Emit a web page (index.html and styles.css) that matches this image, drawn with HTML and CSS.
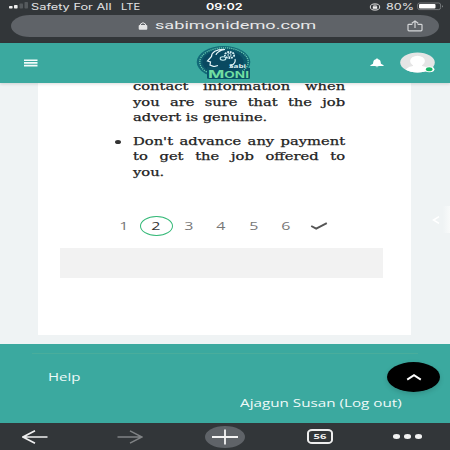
FILE: index.html
```
<!DOCTYPE html>
<html lang="en">
<head>
<meta charset="utf-8">
<title>Sabi Moni</title>
<link rel="stylesheet" href="styles.css">
</head>
<body>
<div class="phone">
  <div class="chrome">
    <div class="status">
      <svg class="signal" width="20" height="12" viewBox="0 0 20 12"><rect x="0" y="7" width="3.6" height="2.5" rx=".7" fill="#eee"/><rect x="5" y="6" width="3.6" height="3.5" rx=".7" fill="#eee"/><rect x="10.5" y="4.5" width="3.5" height="5" rx=".7" fill="#55595c"/><rect x="15.5" y="3" width="3.5" height="6.5" rx=".7" fill="#55595c"/></svg>
      <div class="carrier"><span>Safety For All</span></div>
      <div class="network"><span>LTE</span></div>
      <div class="clock"><span>09:02</span></div>
      <svg class="lock-rotation" width="12" height="10" viewBox="0 0 12 10"><ellipse cx="6" cy="5" rx="4.7" ry="3.1" fill="none" stroke="#ddd" stroke-width="1"/><rect x="3.8" y="4.3" width="4.4" height="2.5" fill="#eee"/><path d="M4.7 4.5V3.6Q6 2.5 7.3 3.6V4.5" fill="none" stroke="#eee" stroke-width=".7"/></svg>
      <div class="percent"><span>80%</span></div>
      <svg class="battery" width="28" height="10" viewBox="0 0 28 10"><rect x=".6" y="2" width="23" height="6.6" rx="2" fill="none" stroke="#85898b" stroke-width=".8"/><rect x="2" y="3.1" width="16.5" height="4.5" rx="1" fill="#fff"/><path d="M25 4.2Q27 5.3 25 6.4Z" fill="#85898b"/></svg>
    </div>
    <div class="address">
      <svg class="padlock" width="10" height="10" viewBox="0 0 10 10"><rect x=".7" y="4" width="8.6" height="4.8" rx="1" fill="#e4e5e6"/><path d="M2.5 4.5V3Q5 .4 7.5 3V4.5" fill="none" stroke="#e4e5e6" stroke-width="1"/></svg>
      <div class="url"><span>sabimonidemo.com</span></div>
      <svg class="share" width="16" height="12" viewBox="0 0 16 12"><path d="M5.4 4.3H2Q1 4.3 1 5V9.8Q1 10.8 2 10.8H14Q15 10.8 15 9.8V5Q15 4.3 14 4.3H10.6M8 8V1.2M4.8 3.2 8 1 11.2 3.2" fill="none" stroke="#d4d6d8" stroke-width="1.2"/></svg>
    </div>
  </div>

  <header class="header">
    <svg class="menu" width="14" height="8" viewBox="0 0 14 8"><path d="M0 1.2H13.5M0 3.9H13.5M0 6.6H13.5" stroke="#f2fbfa" stroke-width="1.6"/></svg>
    <svg class="logo" width="56" height="36" viewBox="0 0 56 36">
      <ellipse cx="27.5" cy="17" rx="26.8" ry="16" fill="#126a78"/>
      <path d="M11 23H54V32Q54 34 51 34H14Q11 34 11 31Z" fill="#0b5367"/>
      <ellipse cx="28" cy="17" rx="24.2" ry="14.2" fill="#0d596c" stroke="#67c9b0" stroke-width="1.3" stroke-dasharray="1.2 .9"/>
      <ellipse cx="27" cy="17" rx="20.5" ry="11.8" fill="#094961"/>
      <path d="M29 4.5C20 4 15.5 7.5 15.5 11.5L11.5 16 14.5 17 14 20 18 21.5 22 20.5M29 4.5C24 5 20 8 20 10M39 14C40 17 37 20 34 21.5" fill="none" stroke="#e4f5f8" stroke-width="1.2"/>
      <ellipse cx="33.5" cy="10" rx="4.7" ry="3" fill="none" stroke="#d7f1f4" stroke-width="1.8" stroke-dasharray="1.8 .8"/>
      <circle cx="33.5" cy="10" r="1.6" fill="none" stroke="#e8fafb" stroke-width=".8"/>
      <ellipse cx="27" cy="13.5" rx="2.8" ry="1.7" fill="none" stroke="#c8edf0" stroke-width="1.1"/>
      <path d="M11 22H24V26H54V33.5H11Z" fill="#0b5367"/>
      <text x="33" y="23.4" class="logo-sabi" textLength="17" lengthAdjust="spacingAndGlyphs">Sabi</text>
      <text x="12" y="32.5" class="logo-moni" textLength="41" lengthAdjust="spacingAndGlyphs"><tspan class="logo-initial">M</tspan>ONI</text>
    </svg>
    <svg class="bell" width="14" height="10" viewBox="0 0 14 10"><path d="M7 .4C7.8 .4 8 .8 8 1.2C11 1.8 10.7 4.5 11 5.7L13.6 7.3V8H.4V7.3L3 5.7C3.3 4.5 3 1.8 6 1.2C6 .8 6.2 .4 7 .4ZM5.2 8.5H8.8Q7 10 5.2 8.5Z" fill="#fff"/></svg>
    <svg class="avatar" width="36" height="22" viewBox="0 0 36 22"><defs><clipPath id="face"><ellipse cx="17.5" cy="10.5" rx="17.3" ry="10"/></clipPath></defs><g clip-path="url(#face)"><path fill="#e5e5e5" d="M0 0H36V22H0Z"/><ellipse cx="17.5" cy="9" rx="7.4" ry="5.2" fill="#fff"/><path d="M13 12H22V14Q30 15 31 22H4Q5 15 13 14Z" fill="#fff"/></g><ellipse cx="29.4" cy="17.3" rx="5" ry="2.9" fill="#fff"/><ellipse cx="29.2" cy="17.2" rx="3.3" ry="2" fill="#16b666"/></svg>
  </header>

  <main class="page">
    <section class="card">
      <div class="article">
        <p class="line justify">contact information when</p>
        <p class="line justify">you are sure that the job</p>
        <p class="line">advert is genuine.</p>
        <div class="bullet">
          <p class="line justify">Don't advance any payment</p>
          <p class="line justify">to get the job offered to</p>
          <p class="line">you.</p>
        </div>
      </div>
      <nav class="steps">
        <div class="step"><span>1</span></div>
        <div class="step current"><span>2</span></div>
        <div class="step"><span>3</span></div>
        <div class="step"><span>4</span></div>
        <div class="step"><span>5</span></div>
        <div class="step"><span>6</span></div>
        <div class="step"><svg width="18" height="8" viewBox="0 0 18 8"><path d="M1.2 4 6.2 6.6 16.8 1.2" fill="none" stroke="#555" stroke-width="1.9"/></svg></div>
      </nav>
      <div class="panel"></div>
    </section>
    <div class="drawer"><svg width="8" height="8" viewBox="0 0 8 8"><path d="M7 .7 1.5 4 7 7.3" fill="none" stroke="#fff" stroke-width="1.5"/></svg></div>
  </main>

  <footer class="footer">
    <div class="rule"></div>
    <div class="help"><span>Help</span></div>
    <div class="account"><span>Ajagun Susan (Log out)</span></div>
    <div class="to-top"><svg width="16" height="8" viewBox="0 0 16 8"><path d="M1.2 6.6 8 2.2 14.8 6.6" fill="none" stroke="#fff" stroke-width="1.9"/></svg></div>
  </footer>

  <nav class="toolbar">
    <svg width="26" height="14" viewBox="0 0 26 14"><path d="M25.5 7H1M13 .8 1 7 13 13.2" fill="none" stroke="#f0f0f0" stroke-width="1.6"/></svg>
    <svg width="26" height="14" viewBox="0 0 26 14"><path d="M.5 7H25M13 .8 25 7 13 13.2" fill="none" stroke="#808385" stroke-width="1.5"/></svg>
    <div class="new-tab"><svg width="26" height="16" viewBox="0 0 26 16"><path d="M0 8H26M13 .5V15.5" stroke="#f4f4f4" stroke-width="1.8"/></svg></div>
    <div class="tabs"><span>56</span></div>
    <div class="more"><i></i><i></i><i></i></div>
  </nav>
</div>
</body>
</html>
```

FILE: styles.css
```
* { box-sizing: border-box; }
body { margin: 0; background: #323639; }
.phone { width: 450px; height: 450px; overflow: hidden; display: flex; flex-direction: column; font-family: "Open Sans", sans-serif; }
svg { display: block; flex: none; }
span { display: inline-block; white-space: nowrap; transform-origin: 0 50%; }

.chrome { height: 43px; flex: none; background: #323639; padding: 0 11px; }
.status { height: 15px; margin-left: -4px; display: flex; align-items: flex-start; font: 9px/13px Inter, sans-serif; color: #e2e3e4; }
.status > * { flex: none; }
.signal { width: 24px; height: 12px; margin-top: -1px; }
.signal, .battery, .lock-rotation { overflow: visible; }
.carrier { width: 90px; }
.carrier span { transform: scaleX(1.42); }
.network { width: 84.5px; }
.network span { transform: scaleX(1.24); }
.clock { width: 163px; font-weight: 600; color: #fff; }
.clock span { transform: scaleX(1.4); }
.lock-rotation { margin-top: 2px; margin-right: 5.5px; }
.percent { width: 31px; }
.percent span { transform: scaleX(1.4); }
.battery { margin-top: 1px; }
.address { height: 22px; border-radius: 19px / 11px; background: #5f6368; display: flex; align-items: center; padding-left: 127px; }
.url { width: 252px; margin-left: 6.5px; font: 11px/20px Roboto, sans-serif; color: #e8e9ea; }
.url span { transform: scaleX(1.65); }

.header { height: 40px; flex: none; background: #3ba99f; display: flex; align-items: center; padding-left: 24px; box-shadow: 0 1px 3px rgba(0,0,0,.15); z-index: 1; }
.logo { margin-left: 158px; }
.logo-sabi { font: 700 5.5px "Open Sans", sans-serif; fill: #def1f2; }
.logo-moni { font: 700 8.5px/1 Inter, sans-serif; fill: #70dda2; }
.logo-initial { font-size: 11px; }
.bell { margin-left: 118px; }
.avatar { margin-left: 16px; }

.page { height: 261px; flex: none; background: #eff3f4; display: flex; padding-left: 38px; }
.card { width: 373px; height: 252px; background: #fff; padding-left: 22px; }
.article { height: 133px; margin-left: 73px; font: 10.5px/15.5px "DejaVu Serif", serif; color: #222; margin-top: -4px; -webkit-text-stroke: .25px #222; }
.line { margin: 0; width: 151.5px; white-space: nowrap; transform: scaleX(1.4); transform-origin: 0 50%; }
.justify { text-align: justify; text-align-last: justify; }
.bullet { margin-top: 8px; display: flow-root; position: relative; }
.bullet::before { content: ""; position: absolute; left: -18px; top: 6px; width: 6px; height: 4px; border-radius: 50%; background: #333; }
.steps { display: flex; height: 20px; margin: 4px 0 0 47.5px; }
.step { width: 32.5px; height: 20px; display: flex; align-items: center; justify-content: center; font-size: 10px; line-height: 18px; color: #777; }
.step span { transform: scaleX(1.6); transform-origin: 50% 50%; }
.current { border: 1.8px solid #35b978; border-radius: 50%; color: #333; line-height: 14px; }
.panel { width: 323px; height: 30px; margin-top: 12px; background: #f2f2f2; }
.drawer { margin-left: auto; align-self: flex-start; margin-top: 123px; width: 18px; height: 27px; display: flex; align-items: center; background: linear-gradient(90deg, transparent 60%, #f8fafa); }

.footer { height: 79px; flex: none; background: #3ba99f; padding: 9px 32px 0; color: #effaf9; position: relative; }
.rule { height: 1px; background: #49ad9c; }
.help { margin: 13px 0 0 16px; font-size: 10.5px; line-height: 20px; }
.help span { transform: scaleX(1.43); }
.account { margin: 6px 0 0 208px; font-size: 10.5px; line-height: 20px; }
.account span { transform: scaleX(1.45); }
.to-top { position: absolute; left: 387px; top: 18px; width: 53px; height: 30px; border-radius: 50%; background: #000; display: flex; align-items: center; justify-content: center; box-shadow: 0 2px 5px rgba(0,0,0,.15); }

.toolbar { height: 27px; flex: none; background: #323639; display: flex; align-items: center; padding-left: 22px; }
.toolbar svg + svg { margin-left: 69px; }
.new-tab { width: 40px; height: 22px; margin-left: 62px; border-radius: 50%; background: #5f6368; display: flex; align-items: center; justify-content: center; }
.tabs { width: 26px; height: 15px; margin-left: 62px; border: 2px solid #eee; border-radius: 5px / 4px; display: flex; align-items: center; justify-content: center; font: 700 7px/11px "Open Sans", sans-serif; color: #eee; }
.tabs span { transform: scaleX(1.6); transform-origin: 50% 50%; }
.more { display: flex; gap: 4px; margin-left: 60px; }
.more i { width: 7px; height: 4.5px; border-radius: 50%; background: #f3f3f3; }
```
